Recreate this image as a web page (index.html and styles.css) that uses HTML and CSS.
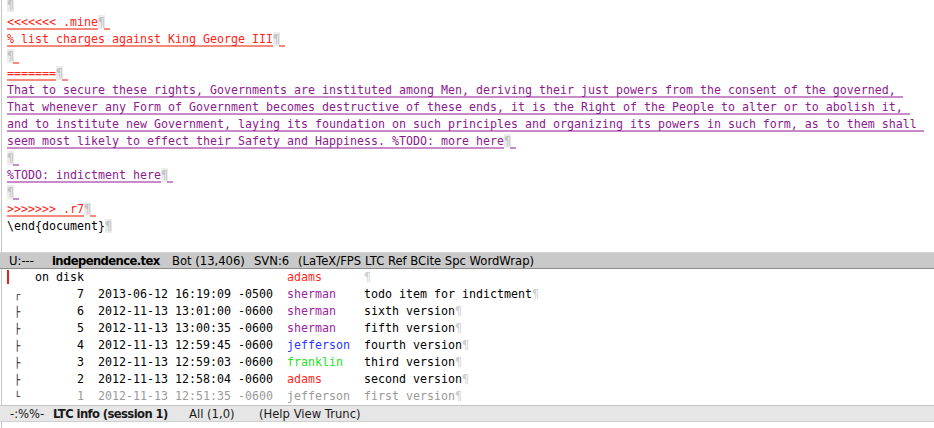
FILE: index.html
```html
<!DOCTYPE html>
<html>
<head>
<meta charset="utf-8">
<link rel="stylesheet" href="styles.css">
</head>
<body>
<div class="win top">
  <div class="lines">
    <div class="ln"><span class="pil">¶</span></div>
    <div class="ln"><span class="seg red">&lt;&lt;&lt;&lt;&lt;&lt;&lt; .mine</span><span class="pil">¶</span><span class="tail red"></span></div>
    <div class="ln"><span class="seg red">% list charges against King George III</span><span class="pil">¶</span><span class="tail red"></span></div>
    <div class="ln"><span class="pil">¶</span><span class="tail red"></span></div>
    <div class="ln"><span class="seg red">=======</span><span class="pil">¶</span><span class="tail red"></span></div>
    <div class="ln"><span class="seg pur">That to secure these rights, Governments are instituted among Men, deriving their just powers from the consent of the governed, </span></div>
    <div class="ln"><span class="seg pur">That whenever any Form of Government becomes destructive of these ends, it is the Right of the People to alter or to abolish it, </span></div>
    <div class="ln"><span class="seg pur">and to institute new Government, laying its foundation on such principles and organizing its powers in such form, as to them shall </span></div>
    <div class="ln"><span class="seg pur">seem most likely to effect their Safety and Happiness. %TODO: more here</span><span class="pil">¶</span><span class="tail pur"></span></div>
    <div class="ln"><span class="pil">¶</span><span class="tail pur"></span></div>
    <div class="ln"><span class="seg pur">%TODO: indictment here</span><span class="pil">¶</span><span class="tail pur"></span></div>
    <div class="ln"><span class="pil">¶</span><span class="tail pur"></span></div>
    <div class="ln"><span class="seg red">&gt;&gt;&gt;&gt;&gt;&gt;&gt; .r7</span><span class="pil">¶</span><span class="tail red"></span></div>
    <div class="ln"><span class="plain">\end{document}</span><span class="pil">¶</span></div>
    <div class="ln"></div>
  </div>
</div>
<div class="modeline active">
  <span class="ml-a">U:---</span><span class="ml-b bold">independence.tex</span><span class="ml-c">Bot (13,406)</span><span class="ml-d">SVN:6</span><span>(LaTeX/FPS LTC Ref BCite Spc WordWrap)</span>
</div>
<div class="win bottom">
  <div class="lines">
    <div class="ln"><span class="cursor"> </span>   on disk                             <span class="a-adams">adams</span>      <span class="p2">¶</span></div>
    <div class="ln"> <span class="tree">┌</span>        7  2013-06-12 16:19:09 -0500  <span class="a-sherman">sherman</span>    todo item for indictment<span class="p2">¶</span></div>
    <div class="ln"> <span class="tree">├</span>        6  2012-11-13 13:01:00 -0600  <span class="a-sherman">sherman</span>    sixth version<span class="p2">¶</span></div>
    <div class="ln"> <span class="tree">├</span>        5  2012-11-13 13:00:35 -0600  <span class="a-sherman">sherman</span>    fifth version<span class="p2">¶</span></div>
    <div class="ln"> <span class="tree">├</span>        4  2012-11-13 12:59:45 -0600  <span class="a-jefferson">jefferson</span>  fourth version<span class="p2">¶</span></div>
    <div class="ln"> <span class="tree">├</span>        3  2012-11-13 12:59:03 -0600  <span class="a-franklin">franklin</span>   third version<span class="p2">¶</span></div>
    <div class="ln"> <span class="tree">├</span>        2  2012-11-13 12:58:04 -0600  <span class="a-adams">adams</span>      second version<span class="p2">¶</span></div>
    <div class="ln"> <span class="tree">└</span><span class="old">        1  2012-11-13 12:51:35 -0600  jefferson  first version</span><span class="p2">¶</span></div>
  </div>
</div>
<div class="modeline inactive">
  <span class="ml-a">-:%%-</span><span class="ml-e bold">LTC info (session 1)</span><span class="ml-f">All (1,0)</span><span>(Help View Trunc)</span>
</div>
<div class="win rest"></div>
</body>
</html>
```
FILE: styles.css
```css
html, body {
  margin: 0;
  padding: 0;
  background: #ffffff;
  overflow: hidden;
}
body {
  width: 934px;
  height: 428px;
  font-family: "DejaVu Sans Mono", monospace;
  font-size: 11.63px;
  color: #000;
}
.win {
  margin-left: 1px;
  border-left: 1px solid #c6c6c6;
  padding-left: 5px;
  overflow: hidden;
}
.win.top {
  height: 252px;
}
.win.top .lines {
  margin-top: -3px;
}
.win.bottom {
  height: 136px;
}
.win.rest {
  height: 7px;
}
.ln {
  height: 17px;
  line-height: 17px;
  white-space: pre;
}
.seg, .tail {
  display: inline-block;
  vertical-align: top;
  height: 17px;
  background-repeat: no-repeat;
  background-position: 0 14px;
  background-size: 100% 2px;
}
.seg.red {
  color: #ff2418;
  background-image: linear-gradient(#f6897c, #f6897c);
}
.seg.pur {
  color: #8c1b8c;
  background-image: linear-gradient(#c98ac9, #c98ac9);
}
.tail {
  width: 6px;
  margin-left: -1px;
}
.tail.red {
  background-image: linear-gradient(#f6897c, #f6897c);
}
.tail.pur {
  background-image: linear-gradient(#c98ac9, #c98ac9);
}
.pil {
  color: #c4c4c4;
  background: #ececec;
}
.p2 {
  color: #cfcfcf;
}
.cursor {
  box-shadow: inset 2px 0 0 #e0231c;
}
.tree {
  display: inline-block;
  width: 7px;
  font-size: 10px;
  color: #1e1e1e;
  vertical-align: top;
}
.old {
  color: #9a9a9a;
}
.a-adams { color: #ff2a1e; }
.a-sherman { color: #9b259b; }
.a-jefferson { color: #2b35ff; }
.a-franklin { color: #26e226; }

.modeline {
  display: flex;
  align-items: center;
  font-family: "DejaVu Sans", sans-serif;
  font-size: 11.6px;
  white-space: pre;
  box-sizing: border-box;
}
.modeline.active {
  height: 17px;
  padding-left: 9px;
  background: #c9c9c9;
  border-top: 1px solid #d6d6d6;
  border-bottom: 1px solid #8c8c8c;
  color: #000;
}
.modeline.inactive {
  height: 17px;
  padding-left: 10px;
  background: #e6e6e6;
  border-top: 1px solid #c4c4c4;
  border-bottom: 1px solid #d0d0d0;
  color: #1a1a1a;
}
.bold {
  font-weight: bold;
  letter-spacing: -0.6px;
}
.ml-a { width: 43px; }
.ml-b { width: 120px; }
.ml-c { width: 82px; }
.ml-d { width: 44px; }
.ml-e { width: 136px; }
.ml-f { width: 70px; }
```
